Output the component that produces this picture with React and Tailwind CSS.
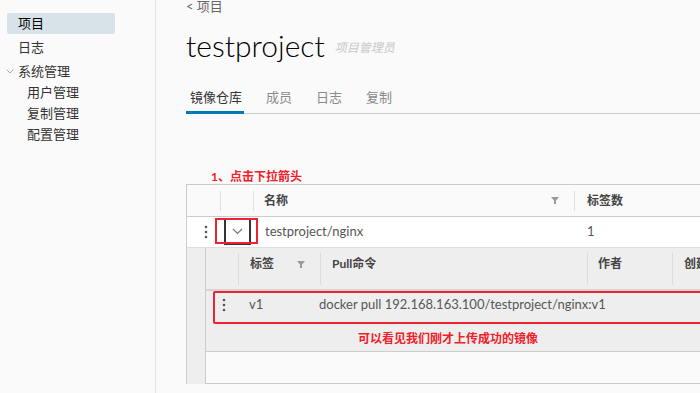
import React from "react";

const FONT = { fontFamily: 'Lato, "Noto Sans CJK SC", sans-serif' };

function Kebab() {
  return (
    <svg width="4" height="14" viewBox="0 0 4 14">
      <circle cx="2" cy="2" r="1.3" fill="#555" />
      <circle cx="2" cy="7" r="1.3" fill="#555" />
      <circle cx="2" cy="12" r="1.3" fill="#555" />
    </svg>
  );
}

function Filter() {
  return (
    <svg width="8" height="7" viewBox="0 0 8 7">
      <path d="M0 0 H8 L5 3.5 V7 H3 V3.5 Z" fill="#9a9a9a" />
    </svg>
  );
}

function Chevron({ w = 11, color = "#777" }) {
  return (
    <svg width={w} height="7" viewBox="0 0 11 7">
      <path d="M1 1 L5.5 5.5 L10 1" fill="none" stroke={color} strokeWidth="1.2" />
    </svg>
  );
}

export default function App() {
  return (
    <div className="flex w-[700px] h-[393px] overflow-hidden bg-[#fafafa] text-[#565656]" style={FONT}>
      {/* Sidebar */}
      <div className="w-[156px] shrink-0 border-r border-[#e3e3e3] pt-[13px] text-[13px] text-[#333]">
        <div className="ml-[7px] w-[108px] h-[21px] bg-[#d8e3e9] rounded-[2px] pl-[11px] leading-[21px] text-black">项目</div>
        <div className="pl-[18px] mt-[3px] h-[21px] leading-[21px]">日志</div>
        <div className="flex items-center mt-[3px] h-[21px] leading-[21px]">
          <span className="w-[18px] flex justify-center pl-[2px]">
            <Chevron w={8} color="#999" />
          </span>
          <span>系统管理</span>
        </div>
        <div className="pl-[27px] h-[21px] leading-[21px]">用户管理</div>
        <div className="pl-[27px] h-[21px] leading-[21px]">复制管理</div>
        <div className="pl-[27px] h-[21px] leading-[21px]">配置管理</div>
      </div>

      {/* Main */}
      <div className="flex-1 min-w-0 pl-[30px] relative">
        <div className="h-[13px] leading-[13px] text-[13px] text-[#666]">&lt; 项目</div>
        <div className="flex items-end h-[50px]">
          <span className="text-[30px] leading-[36px] font-light text-black">testproject</span>
          <span className="ml-[10px] mb-[6px] text-[12px] italic text-[#c8c8c8]">项目管理员</span>
        </div>
        <div className="flex mt-[21px] h-[30px] border-b border-[#cccccc] text-[13px]">
          <div className="border-b-[3px] border-[#0079b8] text-[#333] pl-[4px] pr-[2px] pt-[4px] -mb-[1px] whitespace-nowrap">镜像仓库</div>
          <div className="pl-[22px] pt-[4px] text-[#8a8a8a]">成员</div>
          <div className="pl-[24px] pt-[4px] text-[#8a8a8a]">日志</div>
          <div className="pl-[24px] pt-[4px] text-[#8a8a8a]">复制</div>
        </div>

        <div className="mt-[55px] h-[15px] pl-[25px] text-[12px] leading-[15px] font-bold text-[#f0202a]">1、点击下拉箭头</div>

        {/* Outer table */}
        <div className="border-l border-t border-[#cccccc] w-[600px] relative">
          <div className="flex h-[32px] bg-[#fafafa] border-b border-[#cccccc] text-[12px] font-bold text-[#444] items-center">
            <div className="w-[34px] h-[20px] border-r border-[#e0e0e0]" />
            <div className="w-[33px] h-[20px] border-r border-[#e0e0e0]" />
            <div className="w-[321px] h-[20px] border-r border-[#e0e0e0] flex items-center justify-between pl-[10px] pr-[15px]">
              <span>名称</span>
              <Filter />
            </div>
            <div className="pl-[12px]">标签数</div>
          </div>
          <div className="flex h-[30px] bg-white items-center text-[13px]">
            <div className="w-[34px] flex justify-end pr-[13px]"><Kebab /></div>
            <div className="w-[33px] flex items-center justify-center">
              <div className="w-[27px] h-[26px] border-l-2 border-r-2 border-b-2 border-[#333] flex items-center justify-center">
                <Chevron />
              </div>
            </div>
            <div className="w-[321px] pl-[11px]">testproject/nginx</div>
            <div className="pl-[12px]">1</div>
          </div>
          <div className="absolute left-[28px] top-[33px] w-[43px] h-[26px] border-2 border-[#ee2233]" />

          {/* Expanded */}
          <div className="bg-[#eeeeee] border-t border-[#dddddd] pl-[18px] pb-0">
            <div className="border-l border-[#cccccc] border-b">
              <div className="flex h-[41px] text-[12px] font-bold text-[#444]">
                <div className="w-[33px] mt-[5px] h-[32px] border-r border-[#dcdcdc]" />
                <div className="w-[82px] mt-[5px] h-[32px] border-r border-[#dcdcdc] flex justify-between pl-[11px] pr-[15px] pt-[2px]">
                  <span>标签</span>
                  <span className="pt-[6px]"><Filter /></span>
                </div>
                <div className="w-[267px] mt-[5px] h-[32px] border-r border-[#dcdcdc] pl-[11px] pt-[2px]">Pull命令</div>
                <div className="w-[85px] mt-[5px] h-[32px] border-r border-[#dcdcdc] pl-[10px] pt-[2px]">作者</div>
                <div className="pl-[11px] mt-[5px] pt-[2px] whitespace-nowrap">创建时间</div>
              </div>
              <div className="h-[62px] border-t-2 border-[#d4d4d4] relative text-[13px]">
                <div className="flex h-[28px] items-center">
                  <div className="w-[33px] flex justify-end pr-[13px]"><Kebab /></div>
                  <div className="w-[80px] pl-[10px]">v1</div>
                  <div className="whitespace-nowrap">docker pull 192.168.163.100/testproject/nginx:v1</div>
                </div>
                <div className="absolute left-[7px] top-[0px] w-[600px] h-[33px] border-2 border-[#ee2233] rounded-[2px]" />
                <div className="absolute left-[152px] top-[40px] text-[12px] font-bold text-[#f0202a] whitespace-nowrap leading-[16px]">可以看见我们刚才上传成功的镜像</div>
              </div>
              <div className="h-[32px] bg-[#fafafa] border-t border-[#cccccc]" />
            </div>
          </div>
        </div>
      </div>
    </div>
  );
}
